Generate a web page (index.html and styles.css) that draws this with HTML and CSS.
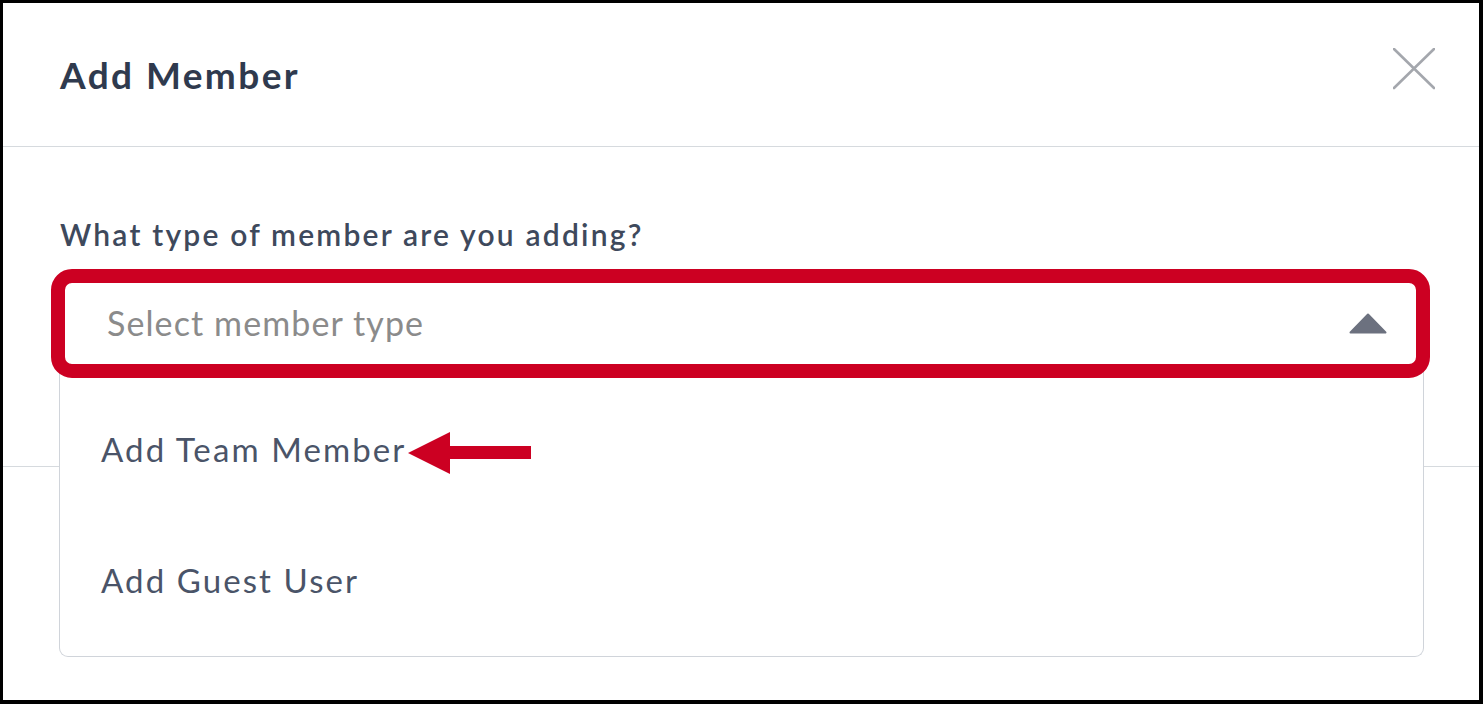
FILE: index.html
```html
<!DOCTYPE html>
<html lang="en">
<head>
<meta charset="utf-8">
<title>Add Member</title>
<link rel="stylesheet" href="styles.css">
</head>
<body>
<div class="frame">
  <div class="header">
    <h1 class="title">Add Member</h1>
    <button class="close" aria-label="Close">
      <svg width="42" height="42" viewBox="0 0 42 42"><path d="M1 1 L41 40 M41 1 L1 40" stroke="#a4a7ad" stroke-width="2.6" stroke-linecap="round" fill="none"/></svg>
    </button>
  </div>
  <div class="body">
    <label class="label">What type of member are you adding?</label>
    <div class="select-wrap">
      <div class="select">
        <span class="placeholder">Select member type</span>
        <svg class="caret" width="38" height="21" viewBox="0 0 38 21"><path d="M19 1.5 L36.5 19.5 L1.5 19.5 Z" fill="#6c717f" stroke="#6c717f" stroke-width="2" stroke-linejoin="round"/></svg>
      </div>
      <div class="highlight"></div>
      <ul class="menu">
        <li class="item">Add Team Member
          <svg class="arrow" width="123" height="42" viewBox="0 0 123 42"><polygon points="0,21 42,0 42,42" fill="#cc0022"/><rect x="41" y="14" width="82" height="13" fill="#cc0022"/></svg>
        </li>
        <li class="item">Add Guest User</li>
      </ul>
    </div>
  </div>
  <div class="footer"></div>
</div>
</body>
</html>
```

FILE: styles.css
```css
* { box-sizing: border-box; }
html, body { margin: 0; padding: 0; background: #fff; }
body { font-family: Lato, "Liberation Sans", sans-serif; }
.frame {
  width: 1483px;
  height: 704px;
  border: 3px solid #000;
  border-right-width: 4px;
  border-bottom-width: 4px;
  overflow: hidden;
  background: #fff;
  display: flex;
  flex-direction: column;
}
.header {
  height: 144px;
  flex: none;
  display: flex;
  align-items: center;
  justify-content: space-between;
  padding: 0 44px 0 57px;
  border-bottom: 1px solid #d6dade;
}
.title {
  margin: 0;
  font-size: 37px;
  font-weight: 700;
  color: #2f3a4e;
  letter-spacing: 2.4px;
}
.close {
  border: 0;
  background: none;
  padding: 0;
  margin-top: -12px;
  width: 42px;
  height: 42px;
  display: flex;
}
.body {
  height: 320px;
  flex: none;
  padding: 70px 55px 0 57px;
  border-bottom: 1px solid #d6dade;
}
.label {
  display: block;
  font-size: 30px;
  font-weight: 600;
  color: #3e495c;
  line-height: 34px;
  letter-spacing: 2.2px;
}
.select-wrap {
  position: relative;
  margin-top: 28px;
}
.select {
  height: 90px;
  display: flex;
  align-items: center;
  justify-content: space-between;
  padding: 0 36px 0 46px;
  border: 1px solid #d0d4da;
  border-radius: 8px;
  background: #fff;
}
.placeholder {
  font-size: 34px;
  color: #8b8b8b;
  letter-spacing: 1.1px;
  margin-top: -3px;
}
.caret { margin-top: -2px; }
.highlight {
  position: absolute;
  left: -9px;
  top: -10px;
  width: 1379px;
  height: 109px;
  border: 14px solid #cc0022;
  border-radius: 21px;
  pointer-events: none;
  z-index: 2;
}
.menu {
  position: absolute;
  left: -1px;
  right: 0;
  top: 89px;
  margin: 0;
  padding: 15px 0 11px;
  list-style: none;
  border: 1px solid #d0d4da;
  border-top: 0;
  border-radius: 0 0 9px 9px;
  background: #fff;
  z-index: 1;
}
.item {
  height: 131px;
  display: flex;
  align-items: center;
  padding-left: 41px;
  font-size: 33px;
  color: #4a5468;
  letter-spacing: 2.1px;
}
.arrow { margin-left: 2px; margin-top: 8px; flex: none; }
.footer { flex: 1; }
```
